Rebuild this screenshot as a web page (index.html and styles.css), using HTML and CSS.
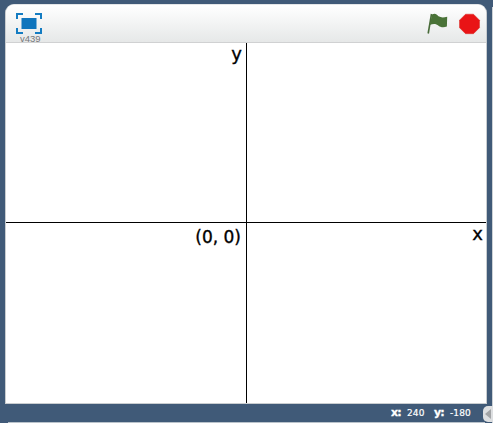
FILE: index.html
```html
<!DOCTYPE html>
<html lang="en">
<head>
<meta charset="utf-8">
<title>Stage</title>
<link rel="stylesheet" href="styles.css">
</head>
<body>
<main class="app">
  <section class="panel">
    <header class="bar">
      <div class="full">
        <svg width="26" height="21" viewBox="0 0 26 21"><path d="M1 6V1h6M19 1h6v5M25 15v5h-6M7 20H1v-5" fill="none" stroke="#147cc2" stroke-width="2"/><rect x="5.5" y="5" width="15" height="11" fill="#0f75bd"/></svg>
        <span class="version">v439</span>
      </div>
      <div class="controls">
        <svg width="22" height="22" viewBox="0 0 22 22"><path d="M5.5 1 2.2 20.5" stroke="#486b39" stroke-width="1.6"/><path d="M6 1.5C9-.3 10.500 1 12.500 3.300c2.500 1.500 5 1.300 8.700.5l-.3 9.800c-3.500 1.300-6.500.8-9-1.300-2.700-2-5-1.600-8.200-.3z" fill="#4a7338"/></svg>
        <svg width="22" height="22" viewBox="0 0 22 22"><path d="M6.500 1.200h8l6 6v7.500l-6 6h-8l-6-6V7.200z" fill="#e91416" stroke="#d92a25" stroke-width=".5"/></svg>
      </div>
    </header>
    <div class="stage">
      <div class="quad axis-right axis-bottom y-label">y</div>
      <div class="quad axis-bottom"></div>
      <div class="quad axis-right origin">(0, 0)</div>
      <div class="quad x-label">x</div>
    </div>
  </section>
  <footer class="status">
    <b class="key">x:</b><span class="val">240</span>
    <b class="key">y:</b><span class="val">-180</span>
  </footer>
  <div class="lower"></div>
  <div class="side"></div>
  <div class="toggle"><svg width="10" height="16" viewBox="0 0 10 16"><path d="M8 3v10L2 8z" fill="#a2a4a6"/></svg></div>
</main>
</body>
</html>
```
FILE: styles.css
```css
body { margin: 0; }
svg { display: block; }
.app {
  position: relative;
  box-sizing: border-box;
  width: 493px;
  height: 423px;
  padding: 4px 6px 0 5px;
  overflow: hidden;
  background: #405a78;
  font-family: "DejaVu Sans", sans-serif;
}
.panel {
  box-sizing: border-box;
  width: 482px;
  height: 400px;
  border: 1px solid #c9cdd0;
  border-top-color: #e4e6e8;
  border-radius: 9px 9px 0 0;
  background: #fff;
  overflow: hidden;
}
.bar {
  display: flex;
  justify-content: space-between;
  box-sizing: border-box;
  height: 38px;
  padding: 8px 5px 0 10px;
  border-bottom: 1px solid #d0d1d2;
  background: linear-gradient(#fff, #e6e8e8);
}
.full { width: 28px; }
.version {
  display: block;
  margin-left: 4px;
  font: 9.5px/10px "Liberation Sans", sans-serif;
  color: #76787a;
}
.controls { display: flex; gap: 11px; }
.stage {
  display: grid;
  grid-template-columns: 241px 1fr;
  grid-template-rows: 180px 180px;
  height: 360px;
}
.quad {
  box-sizing: border-box;
  text-align: right;
  font-size: 18px;
  line-height: 22px;
  color: #000;
  -webkit-text-stroke: .35px #000;
}
.axis-right { border-right: 1px solid #000; }
.axis-bottom { border-bottom: 1px solid #000; }
.y-label { padding-right: 4px; }
.origin { padding: 3px 5px 0 0; font-size: 17px; }
.x-label { padding-right: 3px; }
.status {
  display: flex;
  height: 18px;
  padding-left: 386px;
  font-size: 10px;
  line-height: 18px;
  color: #fff;
}
.key { width: 16px; font-size: 11px; letter-spacing: -.8px; -webkit-text-stroke: .3px #fff; }
.val {
  width: 27px;
  font-size: 9px;
  line-height: 19px;
  letter-spacing: .1px;
  -webkit-text-stroke: .2px #fff;
}
.lower {
  position: absolute;
  left: 8px;
  top: 422px;
  width: 477px;
  height: 1px;
  background: #bac3cb;
}
.side {
  position: absolute;
  left: 492px;
  top: 7px;
  width: 1px;
  height: 416px;
  background: #cdd2d6;
}
.toggle {
  position: absolute;
  left: 483px;
  top: 406px;
  width: 10px;
  height: 16px;
  border-radius: 5px 0 0 5px;
  background: #dddfe1;
}
```
